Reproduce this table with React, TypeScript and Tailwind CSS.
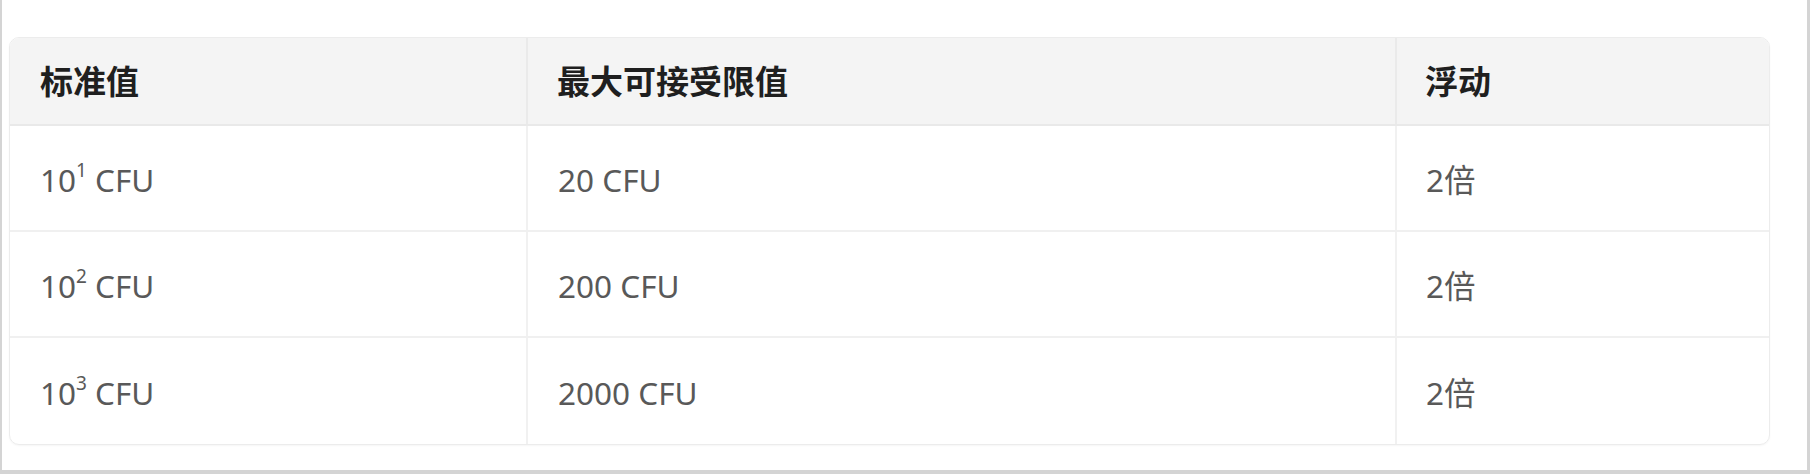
import React from "react";

const rows = [
  { base: "1", max: "20 CFU", drift: "2倍" },
  { base: "2", max: "200 CFU", drift: "2倍" },
  { base: "3", max: "2000 CFU", drift: "2倍" },
];

const font = { fontFamily: '"Noto Sans", "Noto Sans CJK SC", sans-serif' };

export default function App() {
  return (
    <div className="w-[1812px] h-[474px] bg-white" style={font}>
      <div className="w-[1810px] h-[474px] border-l-2 border-r-[3px] border-b-4 border-[#d4d4d4] pt-[37px] pl-[7px]">
        <div className="w-[1761px] rounded-[10px] border border-[#ececec] overflow-hidden shadow-[0_1px_2px_rgba(0,0,0,0.04)]">
          <div className="grid grid-cols-[518px_869px_1fr] h-[88px] bg-[#f4f4f4] border-b-2 border-[#e9e9e9] text-[33px] font-bold text-[#1f1f1f]">
            <div className="flex items-center pl-[30px] pt-[2px] border-r-2 border-[#eaeaea]">标准值</div>
            <div className="flex items-center pl-[29px] pt-[2px] border-r-2 border-[#eaeaea]">最大可接受限值</div>
            <div className="flex items-center pl-[28px] pt-[2px]">浮动</div>
          </div>
          {rows.map((r, i) => (
            <div
              key={r.base}
              className={
                "grid grid-cols-[518px_869px_1fr] h-[106px] text-[31.5px] text-[#595959] " +
                (i < rows.length - 1 ? "border-b-2 border-[#f0f0f0]" : "")
              }
            >
              <div className="flex items-center pl-[30px] pt-[4px] border-r-2 border-[#f1f1f1]">
                <span>
                  10<sup className="text-[19px] -top-[0.8em]">{r.base}</sup> CFU
                </span>
              </div>
              <div className="flex items-center pl-[30px] pt-[4px] border-r-2 border-[#f1f1f1]">{r.max}</div>
              <div className="flex items-center pl-[29px] pt-[4px]">{r.drift}</div>
            </div>
          ))}
        </div>
      </div>
    </div>
  );
}
